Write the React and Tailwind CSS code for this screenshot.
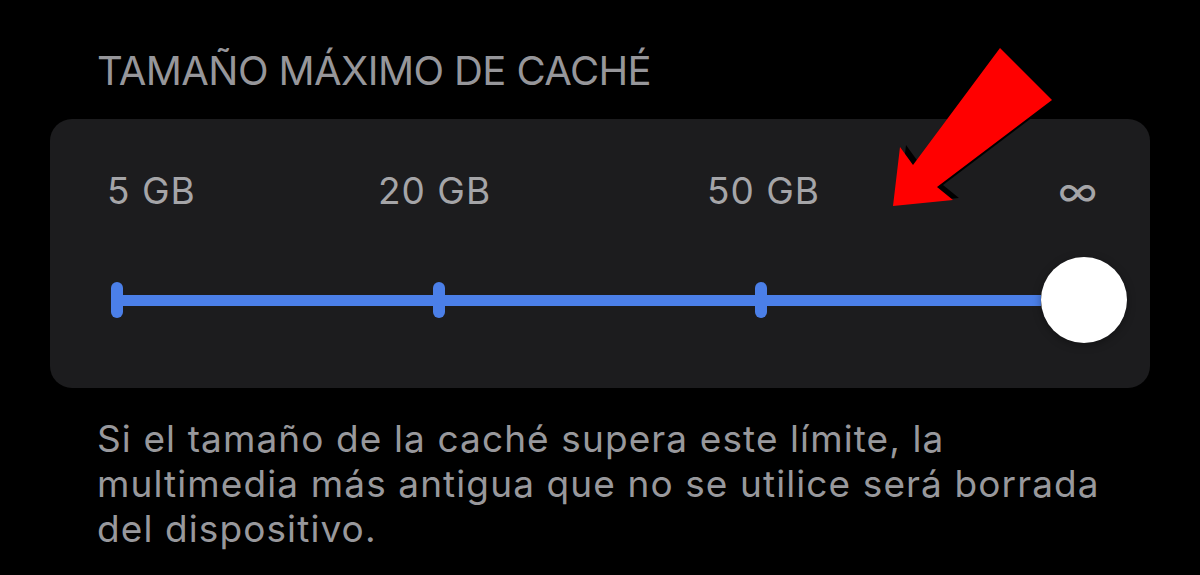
import React from "react";

function Tick() {
  return <div className="w-[12px] h-[36px] rounded-full bg-[#4b7fe8] shrink-0" />;
}

export default function App() {
  return (
    <div className="relative w-[1200px] h-[575px] bg-black overflow-hidden font-['Inter',sans-serif]">
      <div className="pt-[47px] pl-[97px] text-[40px] leading-[48px] text-[#96969a] tracking-[-0.6px]">
        TAMAÑO MÁXIMO DE CACHÉ
      </div>
      <div className="mt-[24px] ml-[50px] w-[1100px] h-[269px] rounded-[22px] bg-[#1c1c1e] pt-[50px]">
        <div className="flex text-[37px] leading-[44px] text-[#a5a5a8] tracking-[1px]">
          <div className="pl-[57px] w-[328px] shrink-0">5 GB</div>
          <div className="w-[329px] shrink-0">20 GB</div>
          <div className="w-[351px] shrink-0">50 GB</div>
          <div className="shrink-0 text-[42px]">∞</div>
        </div>
        <div className="mt-[44px] ml-[61px] flex items-center w-[1016px]">
          <Tick />
          <div className="flex-1 h-[11px] bg-[#4b7fe8]" />
          <Tick />
          <div className="flex-1 h-[11px] bg-[#4b7fe8]" />
          <Tick />
          <div className="w-[274px] h-[11px] bg-[#4b7fe8] shrink-0" />
          <div className="w-[86px] h-[86px] rounded-full bg-white shrink-0 shadow-[0_2px_8px_rgba(0,0,0,0.35)]" />
        </div>
      </div>
      <div className="mt-[28px] pl-[97px] text-[37px] leading-[45px] text-[#98989c] tracking-[1.1px]">
        Si el tamaño de la caché supera este límite, la
        <br />
        multimedia más antigua que no se utilice será borrada
        <br />
        del dispositivo.
      </div>
      <svg
        className="absolute top-0 left-0 pointer-events-none"
        width="1200"
        height="575"
        viewBox="0 0 1200 575"
      >
        <polygon
          points="899,204 906,145 919,163 1006,46 1058,98 943,185 959,198"
          fill="#000"
        />
        <polygon
          points="893,206 900,147 913,165 1000,48 1052,100 937,187 953,200"
          fill="#ff0000"
        />
      </svg>
    </div>
  );
}
